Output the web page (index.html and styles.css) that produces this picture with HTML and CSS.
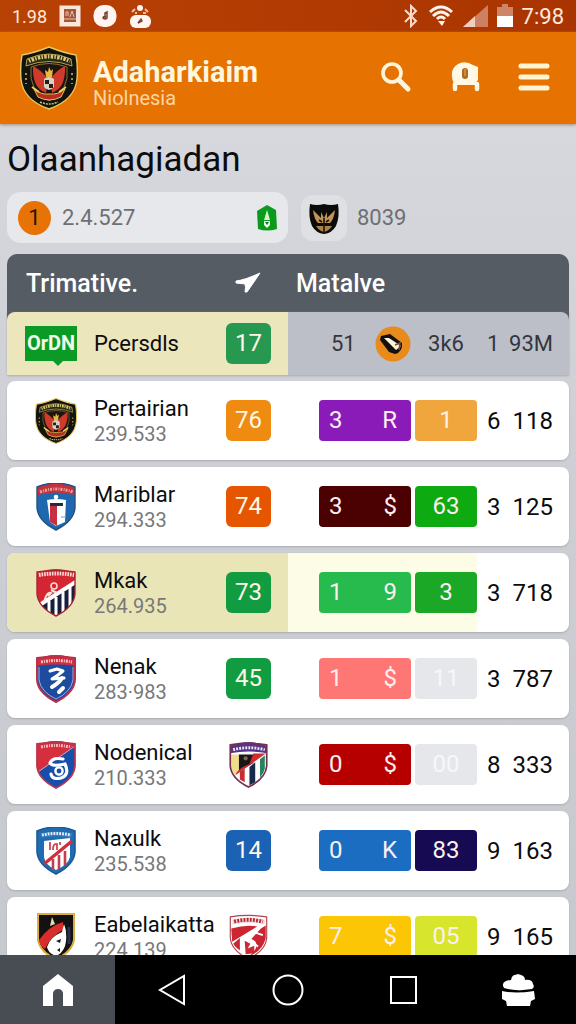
FILE: index.html
```html
<!DOCTYPE html>
<html lang="id">
<head>
<meta charset="utf-8">
<meta name="viewport" content="width=device-width, initial-scale=1">
<title>Adaharkiaim</title>
<link rel="stylesheet" href="styles.css">
</head>
<body>
<svg class="defs" width="0" height="0" aria-hidden="true">
  <defs>
    <clipPath id="shield"><path d="M2 4Q12 0 21 0T40 4V25Q39 38 21 47Q3 38 2 25Z"/></clipPath>
    <symbol id="garuda" viewBox="0 0 58 64">
      <path d="M2 9Q14 7 29 1Q44 7 56 9Q58 20 57 33Q55 54 29 63Q3 54 1 33Q0 20 2 9Z" fill="#12120e" stroke="#e6c860" stroke-width="1.4"/>
      <path d="M7 13Q29 3 51 13L52 20Q29 11 6 20Z" fill="#2b2a14" stroke="#d8c35c" stroke-width=".8"/>
      <path d="M9 15Q29 6 50 15" fill="none" stroke="#dcc873" stroke-width="4" stroke-dasharray="1.5 1.3 2.5 1.2"/>
      <path d="M11 21Q29 14 47 21Q50 45 29 55Q8 45 11 21Z" fill="#1b1410" stroke="#a98b3a" stroke-width=".8"/>
      <path d="M13 20Q20 23 28 33L26 47Q12 42 13 20Z" fill="#cf3a2a"/>
      <path d="M45 20Q38 23 30 33L32 47Q46 42 45 20Z" fill="#cf3a2a"/>
      <path d="M26 31L25 24L28 26L29 21L31 25L33 23L32 31Q29 33 26 31Z" fill="#e9b93c"/>
      <path d="M24 33Q29 29 34 33V41Q29 47 24 41Z" fill="#d8d2c2"/>
      <path d="M25 34H29V38H25ZM29 38H33V42H29Z" fill="#23201c"/>
      <path d="M14 43Q21 49 29 48Q38 49 45 43L41 51Q29 57 18 51Z" fill="#b82d20" stroke="#e6c454" stroke-width="1"/>
      <path d="M12 41L19 46M46 41L39 46" stroke="#ecd45c" stroke-width="1.8"/>
      <path d="M20 56Q29 60 38 56" stroke="#cbbd84" stroke-width="1.5" stroke-dasharray="2 1" fill="none"/>
      <path d="M6 27V38M52 27V38" stroke="#a5964d" stroke-width="2" stroke-dasharray="2 3"/>
    </symbol>
    <symbol id="crest-monument" viewBox="0 0 42 48">
      <g clip-path="url(#shield)">
        <path d="M0 0H42V48H0Z" fill="#1f68ae"/>
        <path d="M0 0H42V13Q21 6 0 13Z" fill="#c4323c"/>
        <path d="M5 9Q21 3 38 9" fill="none" stroke="#eba0a0" stroke-width="3" stroke-dasharray="2 1.2 1 1"/>
        <circle cx="21" cy="14" r="2.3" fill="#fff"/>
        <path d="M12 17Q21 15 31 17L30 39L21 43L15 39Z" fill="#fff"/>
        <path d="M15 23H22V43L15 39Z" fill="#c92f42"/>
        <path d="M15 20H28V23H15Z" fill="#252b3c"/>
        <path d="M26 34H31" stroke="#6a9acb" stroke-width="1"/>
      </g>
      <path d="M2 4Q12 0 21 0T40 4V25Q39 38 21 47Q3 38 2 25Z" fill="none" stroke="#215287" stroke-width="1.4"/>
    </symbol>
    <symbol id="crest-stripes" viewBox="0 0 42 48">
      <g clip-path="url(#shield)">
        <path d="M0 0H42V48H0Z" fill="#d42532"/>
        <path d="M42 12V48H8L5 37Z" fill="#191e3c"/>
        <path d="M14 32V48M21 28V48M28 23V48M35 18V48" stroke="#fff" stroke-width="3"/>
        <path d="M3 37L42 12" stroke="#fff" stroke-width="4"/>
        <path d="M4 6Q21 3 39 6" fill="none" stroke="#fbdcdc" stroke-width="4" stroke-dasharray="1.6 1"/>
        <circle cx="19" cy="17" r="3" fill="none" stroke="#ffd9d2" stroke-width="1.6"/>
        <path d="M9 33Q12 22 16 24L13 27M16 21L22 24" fill="none" stroke="#ffe3dd" stroke-width="2"/>
      </g>
      <path d="M2 3Q21 0 40 3V25Q39 38 21 47Q3 38 2 25Z" fill="none" stroke="#a72433" stroke-width="1.4"/>
    </symbol>
    <symbol id="crest-runner" viewBox="0 0 42 48">
      <g clip-path="url(#shield)">
        <path d="M0 0H42V48H0Z" fill="#1c4ba0"/>
        <path d="M0 0H42V11Q21 8 0 11Z" fill="#cf3040"/>
        <path d="M6 7Q21 4 37 7" fill="none" stroke="#f6c3c3" stroke-width="3" stroke-dasharray="2 1 1 1"/>
        <path d="M15 16L22 14L28 16L23 20L17 24L29 23" fill="none" stroke="#fff" stroke-width="3" stroke-linejoin="round" stroke-linecap="round"/>
        <path d="M27 23Q24 28 17 32M24 37L28 33" fill="none" stroke="#fff" stroke-width="4" stroke-linecap="round"/>
      </g>
      <path d="M2 3Q21 0 40 3V25Q39 38 21 47Q3 38 2 25Z" fill="none" stroke="#b8304a" stroke-width="2"/>
      <path d="M4 12V25Q6 37 21 44Q36 37 38 25V12" fill="none" stroke="#d7bfd8" stroke-width=".8"/>
    </symbol>
    <symbol id="crest-swirl" viewBox="0 0 42 48">
      <g clip-path="url(#shield)">
        <path d="M0 0H42V48H0Z" fill="#174eac"/>
        <path d="M0 0H42V3L3 31L0 28Z" fill="#d62e3d"/>
        <path d="M6 6Q21 3 36 6" fill="none" stroke="#f4b9b9" stroke-width="3" stroke-dasharray="2 1 1 1"/>
        <path d="M3 31L40 5" stroke="#e1a2b0" stroke-width="1"/>
        <path d="M28 18Q17 16 15 22Q17 26 30 23Q35 34 26 37Q17 39 16 33" fill="none" stroke="#fff" stroke-width="3.2" stroke-linecap="round"/>
        <circle cx="24" cy="30" r="3.6" fill="none" stroke="#fff" stroke-width="2.4"/>
      </g>
      <path d="M2 3Q21 0 40 3V25Q39 38 21 47Q3 38 2 25Z" fill="none" stroke="#b43653" stroke-width="1.8"/>
    </symbol>
    <symbol id="crest-sash" viewBox="0 0 42 48">
      <g clip-path="url(#shield)">
        <path d="M0 0H42V48H0Z" fill="#206cb0"/>
        <path d="M9 14L35 11V30Q33 38 21 43Q10 38 9 30Z" fill="#fff"/>
        <path d="M5 6Q21 3 37 6L36 11Q21 8 6 11Z" fill="#3178b6"/>
        <path d="M7 8Q21 5 36 8" fill="none" stroke="#e3f0fa" stroke-width="3" stroke-dasharray="1.8 1.1"/>
        <path d="M18 32V43M24 28V42M30 24V38" stroke="#c33f4c" stroke-width="2.6"/>
        <path d="M9 37L37 14" stroke="#cf303b" stroke-width="3.4"/>
        <path d="M15 23V15M18 23Q18 16 22 17V23M25 15V18" fill="none" stroke="#d04451" stroke-width="1.8"/>
      </g>
      <path d="M2 4Q12 0 21 0T40 4V25Q39 38 21 47Q3 38 2 25Z" fill="none" stroke="#1b5a98" stroke-width="1.6"/>
    </symbol>
    <symbol id="crest-mask" viewBox="0 0 42 48">
      <path d="M3 1H39V27Q37 39 21 46Q5 39 3 27Z" fill="#131112" stroke="#dcae3c" stroke-width="2"/>
      <path d="M4 27Q14 13 28 9V17Q15 24 10 36Q4 32 4 27Z" fill="#d92d2c"/>
      <path d="M29 11Q32 18 31 28Q30 39 21 43Q13 40 12 34Q15 24 27 19Z" fill="#fff"/>
      <path d="M21 28L26 26L25 30ZM22 37L25 35V39Z" fill="#17151a"/>
      <path d="M15 13L17 4L20 11Z" fill="#ecd9a8"/>
      <path d="M34 14V31" stroke="#283150" stroke-width="3"/>
    </symbol>
    <symbol id="crest-eagle" viewBox="0 0 42 48">
      <g clip-path="url(#shield)">
        <path d="M0 0H42V48H0Z" fill="#fff"/>
        <path d="M0 0H42V12Q21 8 0 12Z" fill="#55348c"/>
        <path d="M5 8Q21 4 38 8" fill="none" stroke="#ede3ef" stroke-width="3" stroke-dasharray="2 1.2"/>
        <path d="M3 13H11V31L7 34Q3 30 3 24Z" fill="#f0dc8a"/>
        <path d="M11 13H26V22L11 31Z" fill="#191719"/>
        <path d="M26 12H39L7 35Q9 28 22 23Z" fill="#cf2d30"/>
        <path d="M12 31L17 28V42L12 39Z" fill="#c72c35"/>
        <path d="M22 26L28 21V42L22 45Z" fill="#182a49"/>
        <path d="M33 18L38 14V28Q37 33 33 37Z" fill="#24845a"/>
        <circle cx="18" cy="17" r="2.2" fill="#806b43"/>
      </g>
      <path d="M2 3Q21 0 40 3V25Q39 38 21 47Q3 38 2 25Z" fill="none" stroke="#73304f" stroke-width="1.8"/>
    </symbol>
    <symbol id="crest-redwhite" viewBox="0 0 42 48">
      <g clip-path="url(#shield)">
        <path d="M0 0H42V48H0Z" fill="#fff"/>
        <path d="M4 6Q21 2 38 6V11Q21 7 4 11Z" fill="#f5dcdc"/>
        <path d="M6 8Q21 4 36 8" fill="none" stroke="#b52b3a" stroke-width="4" stroke-dasharray="2 1.3"/>
        <path d="M3 15Q19 11 30 13L4 29Z" fill="#cc2431"/>
        <path d="M39 12V25Q36 38 22 44Q36 31 24 26L34 15Z" fill="#cc2431"/>
        <path d="M5 31L12 25V38Q7 35 5 31Z" fill="#c72934"/>
        <path d="M17 28L23 31L20 36L27 33V41L18 42Z" fill="#c92b36"/>
        <path d="M27 19L36 22M17 24L31 34" stroke="#fff" stroke-width="2"/>
      </g>
      <path d="M2 3Q21 0 40 3V25Q39 38 21 47Q3 38 2 25Z" fill="none" stroke="#b0434b" stroke-width="1.2"/>
    </symbol>
  </defs>
</svg>

<div class="status">
  <div class="status-group">
    <span class="status-count">1.98</span>
    <svg width="22" height="22" viewBox="0 0 22 22"><rect width="21" height="21" x=".5" y=".5" fill="#fbe6dc"/><path d="M5 4H17V17H5Z" fill="#a5553a"/><path d="M7 11V7H9V11M11 12L13 6L15 12M5 14H17" stroke="#e9c0ad" fill="none"/></svg>
    <svg width="24" height="24" viewBox="0 0 24 24"><rect width="23" height="22" x=".5" y="1" rx="10" fill="#fff4ef"/><path d="M12 14V9L14 8V14Q12 16 10 14Q10 12 13 13" fill="none" stroke="#74402f" stroke-width="1.5"/></svg>
    <svg width="24" height="24" viewBox="0 0 24 24"><rect width="21" height="13" x="1" y="11" rx="6" fill="#fff4ef"/><circle cx="11" cy="4" r="3" fill="#fff4ef"/><path d="M3 8L6 5M16 5L19 8M6 9H8M14 9H17" stroke="#f2bda5" stroke-width="2"/><path d="M9 19L12 15L13 17Z" fill="none" stroke="#74402f" stroke-width="1.4"/></svg>
  </div>
  <div class="status-group status-right">
    <svg width="16" height="24" viewBox="0 0 16 24"><path d="M2 6L13 17L8 22V2L13 7L2 18" fill="none" stroke="#f9dccd" stroke-width="2"/></svg>
    <svg width="26" height="24" viewBox="0 0 26 24"><path d="M2 8Q13-2 24 8M5 12Q13 4 21 12M9 15Q13 11 17 15" fill="none" stroke="#fff2eb" stroke-width="3"/><path d="M10 17L17 17L14 22Z" fill="#fff2eb"/></svg>
    <svg width="25" height="24" viewBox="0 0 25 24"><path d="M0 23L25 1V23Z" fill="#ce8063"/><path d="M0 23L12 12V23Z" fill="#f3cdbd"/></svg>
    <svg width="16" height="24" viewBox="0 0 16 24"><path d="M0 3H5V0H11V3H16V12H0Z" fill="#cd8568"/><path d="M0 12H16V23H0Z" fill="#fff"/></svg>
    <span>7:98</span>
  </div>
</div>

<header class="appbar">
  <svg class="brand-crest"><use href="#garuda"/></svg>
  <div class="brand">
    <div class="brand-name">Adaharkiaim</div>
    <div class="brand-sub">Niolnesia</div>
  </div>
  <button class="icon-button" aria-label="Search"><svg width="32" height="32" viewBox="0 0 32 32" fill="none" stroke="#fff5dc"><circle cx="12" cy="11" r="9" stroke-width="3.6"/><path d="M19 18L28 27" stroke-width="5" stroke-linecap="round"/></svg></button>
  <button class="icon-button" aria-label="Notifications"><svg width="32" height="32" viewBox="0 0 32 32"><path d="M3 14Q2 6 9 2Q16-2 24 3L29 5V18L25 23H7Q3 20 3 14Z" fill="#fff8e4"/><rect x="13" y="6" width="6" height="11" rx="3" fill="#a96b27"/><path d="M16 7V14" stroke="#d98832" stroke-width="2"/><path d="M6 22V27M28 22V27" stroke="#fff8e4" stroke-width="4.500" stroke-linecap="round"/><path d="M7 22H27" stroke="#fff8e4" stroke-width="2"/></svg></button>
  <button class="icon-button" aria-label="Menu"><svg width="32" height="32" viewBox="0 0 32 32"><path d="M3 4H29M3 15H29M3 26H29" stroke="#fff5d2" stroke-width="5" stroke-linecap="round"/></svg></button>
</header>

<main class="content">
  <h1 class="page-title">Olaanhagiadan</h1>
  <div class="summary">
    <div class="summary-card">
      <span class="coin">1</span>
      <span>2.4.527</span>
      <svg class="summary-mark" width="20" height="26" viewBox="0 0 20 26"><path d="M10 0L19 5L20 24Q10 27 1 24L0 6Z" fill="#0c9a1d"/><path d="M10 5L13 15H7Z" fill="#d8f4c8"/><path d="M7 16H13V20L10 23L7 20Z" fill="#f0ffe5"/><path d="M8 17H12L10 20Z" fill="#147621"/></svg>
    </div>
    <div class="summary-side">
      <span class="chip"><svg width="32" height="32" viewBox="0 0 32 32"><path d="M2 2Q9 4 16 2Q23 4 30 2Q32 15 28 24Q24 31 16 32Q8 31 4 24Q0 15 2 2Z" fill="#0d0b0a"/><path d="M5 8L13 16V10L16 16L19 10V16L27 8Q26 17 22 21H10Q6 17 5 8Z" fill="#c09555"/><path d="M8 24H24Q21 29 16 30Q11 29 8 24Z" fill="#a98249"/><path d="M16 16V31M11 18L14 20M21 18L18 20" stroke="#1c140c" stroke-width="1.6"/></svg></span>
      <span>8039</span>
    </div>
  </div>

  <table class="standings">
    <thead>
      <tr class="row head">
        <th class="head-team" scope="col">Trimative.</th>
        <th class="head-arrow" scope="col" aria-label="Trend"><svg width="26" height="22" viewBox="0 0 26 22"><path d="M1 9Q10 8 25 1Q19 10 12 20L10 20Q11 15 10 12L1 11Z" fill="#fff" stroke="#fff" stroke-linejoin="round"/></svg></th>
        <th class="head-stats" scope="col">Matalve</th>
      </tr>
    </thead>
    <tbody>
      <tr class="row lead">
        <td class="crest"><span class="flag">OrDN</span></td>
        <td class="team"><div class="team-name">Pcersdls</div></td>
        <td class="rating"><span class="badge green">17</span></td>
        <td class="pair"><div class="pair-plain"><span>51</span><svg width="36" height="36" viewBox="0 0 36 36"><circle cx="18" cy="18" r="17.5" fill="#e98a1d"/><path d="M6 10L15 8L27 17Q28 26 20 28L14 26L5 14Z" fill="#15110f"/><path d="M9 12L14 12L26 20L21 24L18 21Z" fill="#fff3da"/><path d="M20 19L25 17L24 24" fill="none" stroke="#74502d" stroke-width="1.5"/></svg></div></td>
        <td class="second"><span class="second-plain">3k6</span></td>
        <td class="count">1</td>
        <td class="total">93M</td>
      </tr>
      <tr class="row">
        <td class="crest"><svg><use href="#garuda"/></svg></td>
        <td class="team"><div class="team-name">Pertairian</div><div class="team-sub">239.533</div></td>
        <td class="rating"><span class="badge orange">76</span></td>
        <td class="pair"><div class="block purple"><span>3</span><span>R</span></div></td>
        <td class="second"><span class="tile amber">1</span></td>
        <td class="count">6</td>
        <td class="total">118</td>
      </tr>
      <tr class="row">
        <td class="crest"><svg><use href="#crest-monument"/></svg></td>
        <td class="team"><div class="team-name">Mariblar</div><div class="team-sub">294.333</div></td>
        <td class="rating"><span class="badge rust">74</span></td>
        <td class="pair"><div class="block maroon"><span>3</span><span>$</span></div></td>
        <td class="second"><span class="tile lime-green">63</span></td>
        <td class="count">3</td>
        <td class="total">125</td>
      </tr>
      <tr class="row marked">
        <td class="crest"><svg><use href="#crest-stripes"/></svg></td>
        <td class="team"><div class="team-name">Mkak</div><div class="team-sub">264.935</div></td>
        <td class="rating"><span class="badge emerald">73</span></td>
        <td class="pair"><div class="block mint"><span>1</span><span>9</span></div></td>
        <td class="second"><span class="tile leaf">3</span></td>
        <td class="count">3</td>
        <td class="total">718</td>
      </tr>
      <tr class="row">
        <td class="crest"><svg><use href="#crest-runner"/></svg></td>
        <td class="team"><div class="team-name">Nenak</div><div class="team-sub">283·983</div></td>
        <td class="rating"><span class="badge emerald">45</span></td>
        <td class="pair"><div class="block coral"><span>1</span><span>$</span></div></td>
        <td class="second"><span class="tile blank">11</span></td>
        <td class="count">3</td>
        <td class="total">787</td>
      </tr>
      <tr class="row">
        <td class="crest"><svg><use href="#crest-swirl"/></svg></td>
        <td class="team"><div class="team-name">Nodenical</div><div class="team-sub">210.333</div></td>
        <td class="rating"><svg><use href="#crest-eagle"/></svg></td>
        <td class="pair"><div class="block red"><span>0</span><span>$</span></div></td>
        <td class="second"><span class="tile blank">00</span></td>
        <td class="count">8</td>
        <td class="total">333</td>
      </tr>
      <tr class="row">
        <td class="crest"><svg><use href="#crest-sash"/></svg></td>
        <td class="team"><div class="team-name">Naxulk</div><div class="team-sub">235.538</div></td>
        <td class="rating"><span class="badge blue">14</span></td>
        <td class="pair"><div class="block azure"><span>0</span><span>K</span></div></td>
        <td class="second"><span class="tile navy">83</span></td>
        <td class="count">9</td>
        <td class="total">163</td>
      </tr>
      <tr class="row">
        <td class="crest"><svg><use href="#crest-mask"/></svg></td>
        <td class="team"><div class="team-name">Eabelaikatta</div><div class="team-sub">224.139</div></td>
        <td class="rating"><svg><use href="#crest-redwhite"/></svg></td>
        <td class="pair"><div class="block yellow"><span>7</span><span>$</span></div></td>
        <td class="second"><span class="tile lime">05</span></td>
        <td class="count">9</td>
        <td class="total">165</td>
      </tr>
    </tbody>
  </table>
</main>

<nav class="navbar">
  <button class="nav-button active" aria-label="Home"><svg width="32" height="34" viewBox="0 0 32 34"><path d="M16 1L31 13V33H21V20Q20 16 16 16T11 20V33H1V13Z" fill="#fff"/></svg></button>
  <button class="nav-button" aria-label="Back"><svg width="32" height="34" viewBox="0 0 32 34"><path d="M27 3V31L3 17Z" fill="none" stroke="#fff" stroke-width="2"/></svg></button>
  <button class="nav-button" aria-label="Circle"><svg width="32" height="34" viewBox="0 0 32 34"><circle cx="16" cy="17" r="14.5" fill="none" stroke="#fff" stroke-width="2"/></svg></button>
  <button class="nav-button" aria-label="Recent"><svg width="32" height="34" viewBox="0 0 32 34"><rect x="4" y="4" width="25" height="26" fill="none" stroke="#fff" stroke-width="2"/></svg></button>
  <button class="nav-button" aria-label="Apps"><svg width="34" height="34" viewBox="0 0 34 34"><path d="M3 15Q0 10 5 8Q9 7 10 7Q11 2 14 2L17 1L20 2Q24 3 24 7Q31 6 32 11Q34 14 31 16L22 17Q12 18 3 15Z" fill="#fff"/><path d="M1 18Q14 21 33 18L34 26L30 28L29 33H6L5 28L1 26Z" fill="#fff"/></svg></button>
</nav>
</body>
</html>
```
FILE: styles.css
```css
* { box-sizing: border-box; }

body {
  margin: 0;
  height: 100vh;
  display: flex;
  flex-direction: column;
  font-family: Roboto, "Noto Sans", sans-serif;
  color: #0c0c0e;
  background: #d2d4d9;
}

button {
  border: 0;
  padding: 0;
  background: none;
  display: flex;
  align-items: center;
  justify-content: center;
}

svg { display: block; flex: none; }
.defs { position: absolute; }

/* Status bar */
.status {
  flex: none;
  height: 32px;
  padding: 0 12px;
  display: flex;
  align-items: center;
  justify-content: space-between;
  background: linear-gradient(90deg, #b84204, #aa3400);
  color: #fde9dd;
  font-size: 22px;
}
.status-count { font-size: 18px; }
.status-group { display: flex; align-items: center; gap: 12px; }
.status-right { gap: 9px; }

/* App bar */
.appbar {
  flex: none;
  height: 92px;
  padding: 0 20px;
  display: flex;
  align-items: center;
  gap: 25px;
  background: #e67202;
  box-shadow: 0 1px 3px #a98d78;
  z-index: 1;
}
.brand-crest { width: 58px; height: 64px; }
.brand { flex: 1; margin-left: -10px; padding-top: 12px; }
.brand-name { font-size: 29px; line-height: 28px; font-weight: 700; color: #fff6de; }
.brand-sub { font-size: 20px; line-height: 24px; color: #fcd5a3; }
.icon-button { width: 44px; height: 44px; }

/* Content */
.content {
  flex: 1;
  min-height: 0;
  overflow-y: auto;
  scrollbar-width: none;
  padding: 0 7px;
  background: linear-gradient(#d6d8dd, #cdcfd4 40%, #c6c9ce);
}
.page-title {
  margin: 0;
  padding: 14px 0 10px;
  font-size: 35px;
  line-height: 44px;
  font-weight: 400;
}
.summary {
  display: grid;
  grid-template-columns: 1fr 1fr;
  margin-bottom: 11px;
  font-size: 22px;
  color: #6d6f74;
}
.summary-card {
  height: 51px;
  padding: 0 11px;
  display: flex;
  align-items: center;
  gap: 11px;
  background: #e7e8eb;
  border-radius: 14px;
}
.coin {
  width: 33px;
  height: 34px;
  border-radius: 50%;
  background: #e77205;
  color: #2b1404;
  text-align: center;
  line-height: 34px;
}
.summary-mark { margin-left: auto; }
.summary-side { display: flex; align-items: center; gap: 10px; padding-left: 13px; }
.chip { padding: 7px; border-radius: 12px; background: #dfe0e4; }

/* Standings */
.standings { display: block; }
.standings thead, .standings tbody { display: block; }
.row {
  display: grid;
  grid-template-columns: 87px 132fr 62px 123px 66px 28px 64fr;
  height: 79px;
  margin-bottom: 7px;
  background: #fff;
  border-radius: 8px;
  box-shadow: 0 1px 2px #a9acb1;
  overflow: hidden;
}
.row td, .row th { padding: 0; display: flex; align-items: center; }
.row.head {
  height: 58px;
  margin: 0;
  border-radius: 10px 10px 0 0;
  background: #555c63;
  box-shadow: none;
  color: #fff;
  font-size: 25px;
}
.row th { font-weight: 500; }
.head-team { grid-column: span 2; }
.head-stats { grid-column: span 4; }
.row .head-team { padding-left: 19px; }
.row .head-arrow { padding-left: 9px; }
.row .head-stats { padding-left: 8px; }

.row.lead {
  height: 63px;
  margin-bottom: 6px;
  background: #555c63;
  border-radius: 0;
  color: #34363c;
}
.lead .crest, .lead .team, .lead .rating { background: #ece6bd; color: #0c0c0e; }
.lead .pair, .lead .second, .lead .count, .lead .total { background: #bcbfc8; }
.lead .crest { border-top-left-radius: 8px; }
.lead .total { border-top-right-radius: 8px; }
.marked .crest, .marked .team, .marked .rating { background: #eae5b7; }
.marked .pair, .marked .second { background: #fdfce6; }

.row .crest { padding-left: 28px; }
.crest svg { width: 42px; height: 48px; }
.row.lead .crest { padding-left: 18px; }
.flag {
  position: relative;
  width: 52px;
  height: 35px;
  background: #0c9a26;
  color: #effbe6;
  font-size: 20px;
  line-height: 35px;
  font-weight: 700;
  text-align: center;
}
.flag::after {
  content: "";
  position: absolute;
  top: 100%;
  left: 28px;
  border: 5px solid transparent;
  border-top-color: #0c9a26;
  border-bottom: 0;
}

.row .team { flex-direction: column; align-items: flex-start; justify-content: center; }
.team-name { font-size: 22px; line-height: 26px; white-space: nowrap; }
.team-sub { font-size: 20px; line-height: 24px; color: #77787a; }

.badge {
  width: 45px;
  height: 41px;
  border-radius: 6px;
  color: #fff8e8;
  font-size: 24px;
  line-height: 41px;
  text-align: center;
}
.rating svg { width: 45px; height: 46px; }

.row .pair { padding-left: 31px; }
.block, .tile { height: 41px; border-radius: 4px; color: #fdeff0; font-size: 24px; line-height: 41px; }
.block { flex: 1; display: flex; justify-content: space-between; padding: 0 14px 0 10px; }
.pair-plain { flex: 1; display: flex; align-items: center; justify-content: space-between; padding-left: 12px; font-size: 22px; }
.row .second { padding-left: 4px; }
.tile { flex: 1; text-align: center; }
.second-plain { flex: 1; text-align: center; font-size: 22px; }
.row .count { padding-left: 10px; font-size: 24px; }
.row .total { padding-right: 16px; justify-content: flex-end; font-size: 24px; }
.row.lead .count, .row.lead .total { font-size: 22px; }

.green { background: #269850; }
.orange { background: #ee8b10; }
.rust { background: #e65500; }
.emerald { background: #129c42; }
.blue { background: #1b62b4; }
.purple { background: #8b1bb9; }
.amber { background: #f0a63c; }
.maroon { background: #4b0001; }
.lime-green { background: #0daa12; }
.mint { background: #27bb4d; }
.leaf { background: #1ba827; }
.coral { background: #ff7774; }
.blank { background: #e6e7ea; color: #f7f7f9; }
.red { background: #b60000; }
.azure { background: #1b6dc1; }
.navy { background: #160b52; }
.yellow { background: #fbc605; }
.lime { background: #d7e62d; }

/* Bottom navigation */
.navbar { flex: none; height: 69px; display: flex; background: #000; }
.nav-button { flex: 1; }
.nav-button.active { background: #484d54; }
```
